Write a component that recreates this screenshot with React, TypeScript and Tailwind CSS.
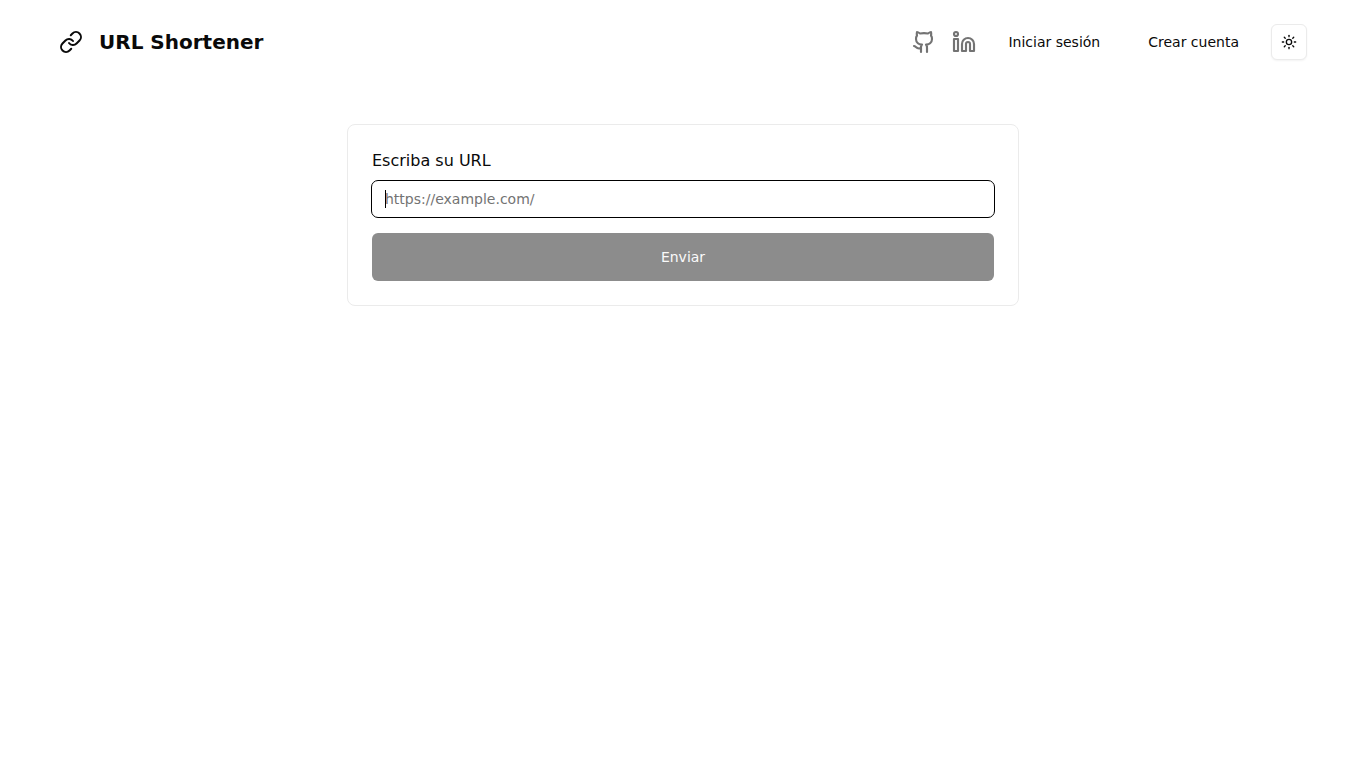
import { Github, Linkedin, Link, Sun } from "lucide-react";

export default function App() {
  return (
    <div className="min-h-screen bg-white text-[#0a0a0a] font-['DejaVu_Sans',sans-serif]">
      <header className="flex h-[84px] items-center justify-between pl-[59px] pr-[59px]">
        <div className="flex items-center gap-4">
          <Link size={24} strokeWidth={2} className="text-[#0a0a0a]" />
          <span className="text-xl font-bold">URL Shortener</span>
        </div>
        <nav className="flex items-center">
          <Github size={24} strokeWidth={2.15} className="text-[#737373]" />
          <Linkedin size={24} strokeWidth={2.15} className="ml-4 text-[#737373]" />
          <span className="ml-[32px] text-sm">Iniciar sesión</span>
          <span className="ml-[48px] text-sm">Crear cuenta</span>
          <button className="ml-[32px] flex h-9 w-9 items-center justify-center rounded-md border border-[#ebebeb] bg-white shadow-xs">
            <Sun size={16} strokeWidth={2} />
          </button>
        </nav>
      </header>
      <main className="flex justify-center pt-10">
        <form className="w-[672px] rounded-lg border border-[#ebebeb] bg-white p-6">
          <label className="block text-base leading-6">Escriba su URL</label>
          <div className="relative mt-2">
            <input
              readOnly
              placeholder="https://example.com/"
              className="block h-9 w-full rounded-md border border-transparent bg-white px-3 text-sm outline outline-black placeholder:text-[#737373]"
            />
            <span className="absolute left-[13px] top-[9px] h-[18px] w-px bg-black" />
          </div>
          <button
            type="button"
            className="mt-4 flex h-12 w-full items-center justify-center rounded-md bg-[#8c8c8c] text-sm text-[#fafafa]"
          >
            Enviar
          </button>
        </form>
      </main>
    </div>
  );
}
